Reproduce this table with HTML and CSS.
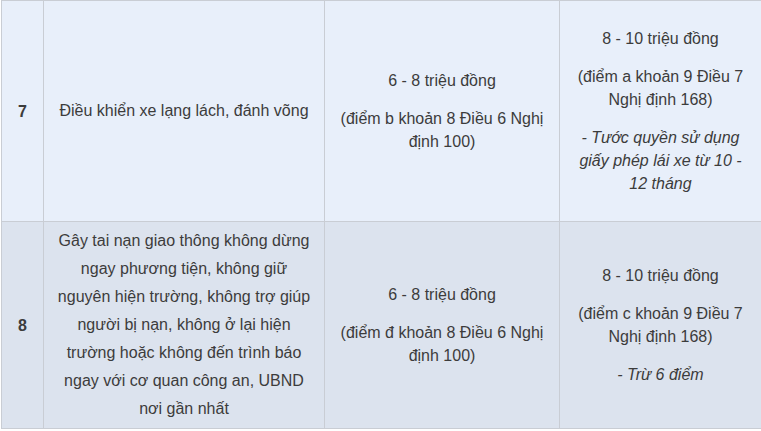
FILE: index.html
```html
<!DOCTYPE html>
<html lang="vi">
<head>
<meta charset="utf-8">
<title>Bảng mức phạt</title>
<link rel="stylesheet" href="styles.css">
</head>
<body>
<div class="wrap">
<table class="fines">
  <colgroup>
    <col class="c-no">
    <col class="c-act">
    <col class="c-old">
    <col class="c-new">
  </colgroup>
  <tbody>
    <tr class="row-a">
      <td class="no">7</td>
      <td class="act">Điều khiển xe lạng lách, đánh võng</td>
      <td class="fine">
        <p>6 - 8 triệu đồng</p>
        <p>(điểm b khoản 8 Điều 6 Nghị định 100)</p>
      </td>
      <td class="fine">
        <p>8 - 10 triệu đồng</p>
        <p>(điểm a khoản 9 Điều 7 Nghị định 168)</p>
        <p><em>- Tước quyền sử dụng giấy phép lái xe từ 10 - 12 tháng</em></p>
      </td>
    </tr>
    <tr class="row-b">
      <td class="no">8</td>
      <td class="act">Gây tai nạn giao thông không dừng ngay phương tiện, không giữ nguyên hiện trường, không trợ giúp người bị nạn, không ở lại hiện trường hoặc không đến trình báo ngay với cơ quan công an, UBND nơi gần nhất</td>
      <td class="fine">
        <p>6 - 8 triệu đồng</p>
        <p>(điểm đ khoản 8 Điều 6 Nghị định 100)</p>
      </td>
      <td class="fine">
        <p>8 - 10 triệu đồng</p>
        <p>(điểm c khoản 9 Điều 7 Nghị định 168)</p>
        <p><em>- Trừ 6 điểm</em></p>
      </td>
    </tr>
  </tbody>
</table>
</div>
</body>
</html>
```
FILE: styles.css
```css
html, body {
  margin: 0;
  padding: 0;
  background: #ffffff;
}

.wrap {
  padding: 0 0 0 1px;
}

.fines {
  border-collapse: collapse;
  table-layout: fixed;
  width: 760px;
  font-family: "Liberation Sans", Arial, sans-serif;
  font-size: 16px;
  color: #3c3c3c;
}

.c-no { width: 42px; }
.c-act { width: 281px; }
.c-old { width: 235px; }
.c-new { width: 202px; }

.fines td {
  border: 1px solid #c9cdd4;
  padding: 5px 10px;
  text-align: center;
  vertical-align: middle;
  line-height: 23px;
}

.row-a td {
  background: #e8effa;
  height: 210px;
}

.row-b td {
  background: #dce3ee;
}

.fines td.no {
  font-weight: bold;
  padding: 5px 2px;
}

.fines td.act {
  line-height: 28px;
  padding: 5px 10px;
}

.fine p {
  margin: 0;
}

.fine p + p {
  margin-top: 15px;
}

.fine em {
  font-style: italic;
}
```
